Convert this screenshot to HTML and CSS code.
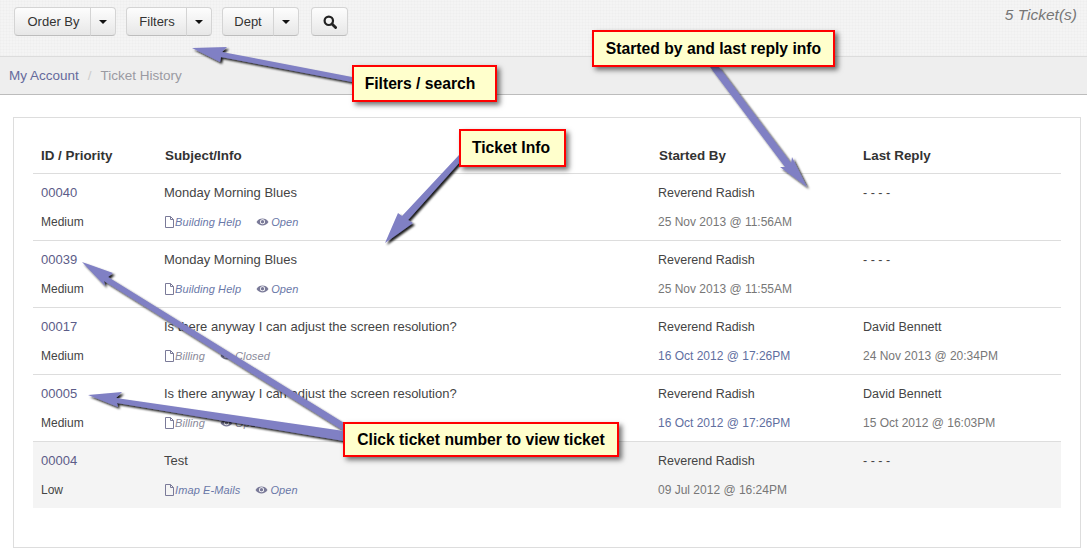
FILE: index.html
```html
<!DOCTYPE html>
<html lang="en">
<head>
  <meta charset="UTF-8">
  <title>Ticket History</title>
  <link rel="stylesheet" href="styles.css">
</head>
<body>
  <svg width="0" height="0" class="defs">
    <defs>
      <g id="i-file"><path d="M1.5 .5h5l3 3v8h-8z M6.5 .5v3h3" fill="none" stroke="currentColor" stroke-width="1"/></g>
      <g id="i-eye"><path d="M.5 5C3 .4 10 .4 12.5 5 10 9.6 3 9.6 .5 5z" fill="currentColor"/><circle cx="6.5" cy="4.8" r="2.5" fill="#fff"/><circle cx="6.5" cy="4.8" r="1.7" fill="currentColor"/></g>
    </defs>
  </svg>

  <div class="topbar">
    <div class="btn-group"><a class="btn btn-order">Order By</a><a class="btn caret-btn"><span class="caret"></span></a></div>
    <div class="btn-group"><a class="btn btn-filters">Filters</a><a class="btn caret-btn"><span class="caret"></span></a></div>
    <div class="btn-group"><a class="btn btn-dept">Dept</a><a class="btn caret-btn"><span class="caret"></span></a></div>
    <a class="btn btn-search">
      <svg width="14" height="14" viewBox="0 0 14 14"><circle cx="5.8" cy="5.8" r="4.2" fill="none" stroke="#222" stroke-width="2.2"/><path d="M9 9l3.6 3.6" stroke="#222" stroke-width="2.8" stroke-linecap="round"/></svg>
    </a>
    <div class="ticket-count">5 Ticket(s)</div>
  </div>

  <div class="breadcrumb"><a>My Account</a><span class="sep">/</span><span class="current">Ticket History</span></div>

  <div class="card">
    <table class="tickets">
      <thead>
        <tr><th class="c-id">ID / Priority</th><th class="c-sub">Subject/Info</th><th class="c-start">Started By</th><th class="c-last">Last Reply</th></tr>
      </thead>
      <tbody>
        <tr class="top"><td><a>00040</a></td><td>Monday Morning Blues</td><td class="who">Reverend Radish</td><td class="who">- - - -</td></tr>
        <tr class="bot"><td>Medium</td><td class="info"><svg class="ico-file" width="11" height="12"><use href="#i-file"/></svg><em>Building Help</em><svg class="ico-eye" width="13" height="10"><use href="#i-eye"/></svg><em>Open</em></td><td class="date">25 Nov 2013 @ 11:56AM</td><td></td></tr>
      </tbody>
      <tbody>
        <tr class="top"><td><a>00039</a></td><td>Monday Morning Blues</td><td class="who">Reverend Radish</td><td class="who">- - - -</td></tr>
        <tr class="bot"><td>Medium</td><td class="info"><svg class="ico-file" width="11" height="12"><use href="#i-file"/></svg><em>Building Help</em><svg class="ico-eye" width="13" height="10"><use href="#i-eye"/></svg><em>Open</em></td><td class="date">25 Nov 2013 @ 11:55AM</td><td></td></tr>
      </tbody>
      <tbody>
        <tr class="top"><td><a>00017</a></td><td>Is there anyway I can adjust the screen resolution?</td><td class="who">Reverend Radish</td><td class="who">David Bennett</td></tr>
        <tr class="bot"><td>Medium</td><td class="info"><svg class="ico-file" width="11" height="12"><use href="#i-file"/></svg><em class="grey">Billing</em><svg class="ico-eye" width="13" height="10"><use href="#i-eye"/></svg><em class="grey">Closed</em></td><td class="date old">16 Oct 2012 @ 17:26PM</td><td class="date">24 Nov 2013 @ 20:34PM</td></tr>
      </tbody>
      <tbody>
        <tr class="top"><td><a>00005</a></td><td>Is there anyway I can adjust the screen resolution?</td><td class="who">Reverend Radish</td><td class="who">David Bennett</td></tr>
        <tr class="bot"><td>Medium</td><td class="info"><svg class="ico-file" width="11" height="12"><use href="#i-file"/></svg><em class="grey">Billing</em><svg class="ico-eye" width="13" height="10"><use href="#i-eye"/></svg><em class="grey">Open</em></td><td class="date old">16 Oct 2012 @ 17:26PM</td><td class="date">15 Oct 2012 @ 16:03PM</td></tr>
      </tbody>
      <tbody class="shaded">
        <tr class="top"><td><a>00004</a></td><td>Test</td><td class="who">Reverend Radish</td><td class="who">- - - -</td></tr>
        <tr class="bot"><td>Low</td><td class="info"><svg class="ico-file" width="11" height="12"><use href="#i-file"/></svg><em>Imap E-Mails</em><svg class="ico-eye" width="13" height="10"><use href="#i-eye"/></svg><em>Open</em></td><td class="date">09 Jul 2012 @ 16:24PM</td><td></td></tr>
      </tbody>
    </table>
  </div>

  <!-- annotations drawn over the screenshot -->
  <svg class="arrows" width="1087" height="554" viewBox="0 0 1087 554">
    <defs>
      <filter id="arrow-shadow" x="-20%" y="-20%" width="140%" height="140%">
        <feDropShadow dx="2" dy="2" stdDeviation="1.2" flood-color="#000" flood-opacity=".9"/>
      </filter>
    </defs>
    <g fill="#8080c4" filter="url(#arrow-shadow)">
      <polygon points="192,48 227,47 222,52 352,77 352,82 221,57 220,62"/>
      <polygon points="710,67 719,67 791,163 792,157 807,187 780,167 785,167"/>
      <polygon points="459,155 459,163 408,220 413,223 385,243 398,213 402,216"/>
      <polygon points="82,262 113,273 108,277 344,423 344,431 104,281 105,286"/>
      <polygon points="88,395 122,392 116,398 344,431 344,441 117,403 118,407"/>
    </g>
  </svg>
  <div class="callout call-filters">Filters / search</div>
  <div class="callout call-started">Started by and last reply info</div>
  <div class="callout call-info">Ticket Info</div>
  <div class="callout call-click">Click ticket number to view ticket</div>
</body>
</html>
```

FILE: styles.css
```css
html, body {
  margin: 0;
  padding: 0;
}

body {
  font-family: "Liberation Sans", Arial, sans-serif;
  font-size: 12px;
  color: #333;
  background-color: #fff;
  width: 1087px;
  height: 554px;
  overflow: hidden;
  position: relative;
}

.defs {
  position: absolute;
}

.topbar {
  display: flex;
  align-items: flex-start;
  gap: 10px;
  box-sizing: border-box;
  height: 57px;
  padding: 7px 10px 0 14px;
  background-color: #f4f4f4;
  background-image:
    repeating-linear-gradient(0deg, rgba(0,0,0,.012) 0 1px, transparent 1px 3px),
    repeating-linear-gradient(90deg, rgba(0,0,0,.012) 0 1px, transparent 1px 3px);
  border-bottom: 1px solid #dcdcdc;
}

.btn-group {
  display: flex;
}

.btn {
  display: flex;
  align-items: center;
  justify-content: center;
  box-sizing: border-box;
  height: 29px;
  font-size: 13px;
  color: #333;
  background: linear-gradient(#fdfdfd, #e7e7e7);
  border: 1px solid #d4d4d4;
  border-bottom-color: #bdbdbd;
  border-radius: 4px;
}

.btn-group .btn:first-child {
  border-radius: 4px 0 0 4px;
}

.caret-btn {
  width: 26px;
  margin-left: -1px;
  border-radius: 0 4px 4px 0;
}

.btn-order { width: 77px; padding-left: 2px; }
.btn-filters { width: 61px; padding-left: 1px; }
.btn-dept { width: 52px; }

.btn-search {
  width: 37px;
  margin-left: 2px;
}

.caret {
  width: 0;
  height: 0;
  border-left: 4px solid transparent;
  border-right: 4px solid transparent;
  border-top: 4px solid #111;
}

.ticket-count {
  margin-left: auto;
  margin-top: -1px;
  font-size: 15.5px;
  font-style: italic;
  color: #777;
}

.breadcrumb {
  display: flex;
  align-items: center;
  box-sizing: border-box;
  height: 38px;
  padding: 0 9px 1px;
  font-size: 13.5px;
  background-color: #eeeeee;
  border-bottom: 1px solid #bcbcbc;
}

.breadcrumb a {
  color: #666a9c;
}

.breadcrumb .sep {
  color: #ccc;
  margin: 0 9px;
}

.breadcrumb .current {
  color: #9a9aa2;
}

.card {
  box-sizing: border-box;
  width: 1068px;
  height: 431px;
  margin: 22px 0 0 13px;
  padding: 19px 19px 0;
  border: 1px solid #dddddd;
}

.tickets {
  width: 1028px;
  table-layout: fixed;
  border-collapse: collapse;
}

.tickets th {
  height: 36px;
  padding: 0 8px;
  font-size: 13.4px;
  text-align: left;
  color: #333;
  border-bottom: 1px solid #dddddd;
}

.c-id { width: 107px; }
.c-sub { width: 477px; }
.c-start { width: 188px; }

.tickets th.c-sub, .tickets th.c-start {
  padding-left: 9px;
}

.tickets td {
  padding: 0 8px;
  font-size: 13px;
  color: #444;
}

.tickets td.who {
  font-size: 12.5px;
}

.tickets tr.top td {
  height: 35px;
  padding-top: 1px;
}

.tickets tr.bot td {
  height: 23px;
  padding-bottom: 7px;
  font-size: 12px;
}

.tickets tbody {
  border-bottom: 1px solid #dddddd;
}

.tickets tbody.shaded {
  background-color: #f4f4f4;
  border-bottom: none;
}

.tickets a {
  color: #5c5c88;
}

.tickets tr.bot td.info {
  font-size: 11px;
  letter-spacing: .1px;
  color: #7a7aa0;
}

.info em {
  color: #6a78a8;
}

.info em.grey {
  color: #8a8a9a;
}

.ico-file, .ico-eye {
  vertical-align: -2px;
  color: #7a7a98;
}

.ico-eye {
  margin-left: 15px;
  margin-right: 2px;
  vertical-align: -1px;
}

.tickets tr.bot td.date {
  color: #777;
}

.tickets tr.bot td.date.old {
  color: #5f6f9f;
}

.arrows {
  position: absolute;
  left: 0;
  top: 0;
}

.callout {
  position: absolute;
  display: flex;
  align-items: center;
  justify-content: center;
  box-sizing: border-box;
  font-size: 15.7px;
  font-weight: bold;
  color: #000;
  background-color: #ffffcc;
  border: 2px solid #f00;
  box-shadow: 3px 3px 5px rgba(0,0,0,.55);
}

.call-filters { left: 352px; top: 65px; width: 145px; height: 37px; padding-right: 9px; }
.call-started { left: 592px; top: 30px; width: 243px; height: 37px; }
.call-info { left: 459px; top: 129px; width: 107px; height: 38px; padding-right: 3px; }
.call-click { left: 343px; top: 422px; width: 276px; height: 35px; }
```
